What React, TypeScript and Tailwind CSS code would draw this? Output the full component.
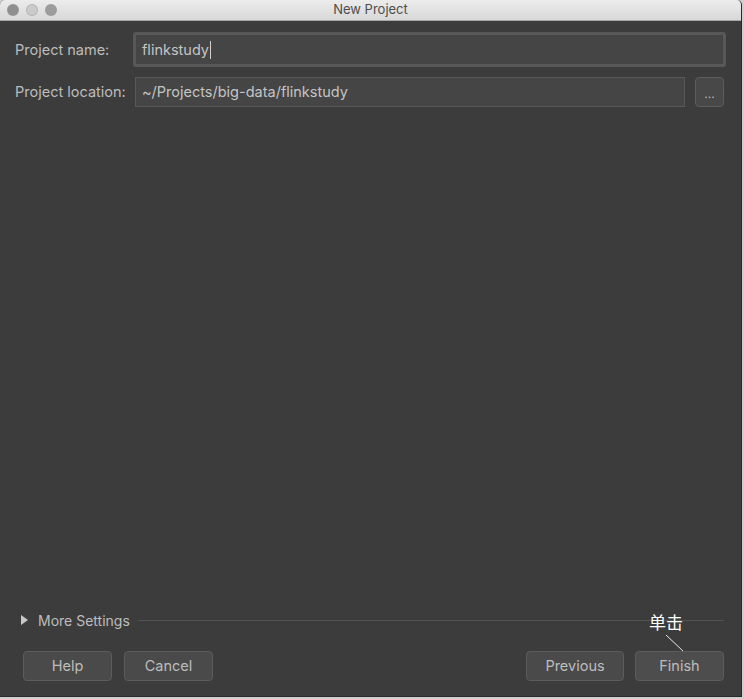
import { ReactNode } from "react";

const font = { fontFamily: '"Inter", "Liberation Sans", sans-serif' };

function Light({ tone }: { tone: string }) {
  return <span className={`h-[12px] w-[12px] rounded-full border border-[#9a9a9a]/40 ${tone}`} />;
}

function DlgButton({ children, className = "" }: { children: ReactNode; className?: string }) {
  return (
    <button
      className={`flex h-[30px] shrink-0 items-center justify-center rounded-[4px] border border-[#5c5c5c] bg-[#4a4a4a] text-[14.5px] text-[#bdbdbd] ${className}`}
    >
      {children}
    </button>
  );
}

export default function App() {
  return (
    <div className="h-[699px] w-[744px] bg-[#cfcfcf]" style={font}>
      <div className="flex h-[697px] w-[742px] flex-col overflow-hidden rounded-t-[5px] border-r border-b border-[#2a2a2a] bg-[#3c3c3c]">
        {/* title bar */}
        <div className="relative flex h-[21px] shrink-0 items-center border-b border-[#a8a8a8] bg-gradient-to-b from-[#ececec] to-[#d8d8d8]">
          <div className="flex items-center gap-[7px] pl-[7px]">
            <Light tone="bg-[#8f8f8f]" />
            <Light tone="bg-[#cacaca]" />
            <Light tone="bg-[#9c9c9c]" />
          </div>
          <div className="absolute inset-0 flex items-center justify-center text-[13px] text-[#4d4d4d]">
            New Project
          </div>
        </div>

        {/* fields */}
        <div className="mt-[11px] flex h-[35px] items-center">
          <span className="w-[133px] shrink-0 whitespace-nowrap pl-[15px] text-[14.5px] text-[#bdbdbd]">
            Project name:
          </span>
          <div className="flex h-[35px] w-[593px] shrink-0 items-center rounded-[3px] border-[3px] border-[#585858] bg-[#454545] pl-[6px] text-[14.5px] text-[#c4c4c4]">
            flinkstudy
            <span className="ml-[1px] h-[18px] w-px bg-[#d0d0d0]" />
          </div>
        </div>
        <div className="mt-[10px] flex h-[30px] items-center">
          <span className="w-[135px] shrink-0 whitespace-nowrap pl-[15px] text-[14.5px] text-[#bdbdbd]">
            Project location:
          </span>
          <div className="flex h-[30px] w-[550px] shrink-0 items-center border border-[#585858] bg-[#454545] pl-[6px] text-[14.5px] text-[#c4c4c4]">
            ~/Projects/big-data/flinkstudy
          </div>
          <button className="ml-[10px] flex h-[30px] w-[29px] shrink-0 items-end justify-center rounded-[4px] border border-[#5c5c5c] bg-[#484848] pb-[6px] text-[12px] leading-none text-[#bdbdbd]">
            ...
          </button>
        </div>

        <div className="flex-1" />

        {/* more settings */}
        <div className="flex h-[20px] items-center pl-[21px] pr-[17px]">
          <svg width="7" height="10" viewBox="0 0 7 10" className="mr-[10px]">
            <path d="M0 0 L7 5 L0 10 Z" fill="#c8c8c8" />
          </svg>
          <span className="text-[14px] text-[#bdbdbd]">More Settings</span>
          <div className="ml-[8px] h-px flex-1 bg-[#525252]" />
        </div>

        {/* buttons */}
        <div className="relative mt-[21px] mb-[15px] flex items-center pl-[23px] pr-[17px]">
          <DlgButton className="w-[89px]">Help</DlgButton>
          <DlgButton className="ml-[12px] w-[89px]">Cancel</DlgButton>
          <div className="flex-1" />
          <DlgButton className="w-[98px] text-[#a8a8a8]">Previous</DlgButton>
          <DlgButton className="ml-[11px] w-[89px] bg-[#4d4d4d]">Finish</DlgButton>

          {/* annotation */}
          <span
            className="absolute top-[-38px] left-[649px] text-[17px] leading-none text-white"
            style={{ fontFamily: '"Noto Sans CJK SC", sans-serif' }}
          >
            单击
          </span>
          <svg className="absolute top-[-17px] left-[664px]" width="22" height="18" viewBox="0 0 22 18">
            <line x1="2" y1="1" x2="19" y2="17" stroke="#e8e8e8" strokeWidth="1" />
          </svg>
        </div>
      </div>
    </div>
  );
}
